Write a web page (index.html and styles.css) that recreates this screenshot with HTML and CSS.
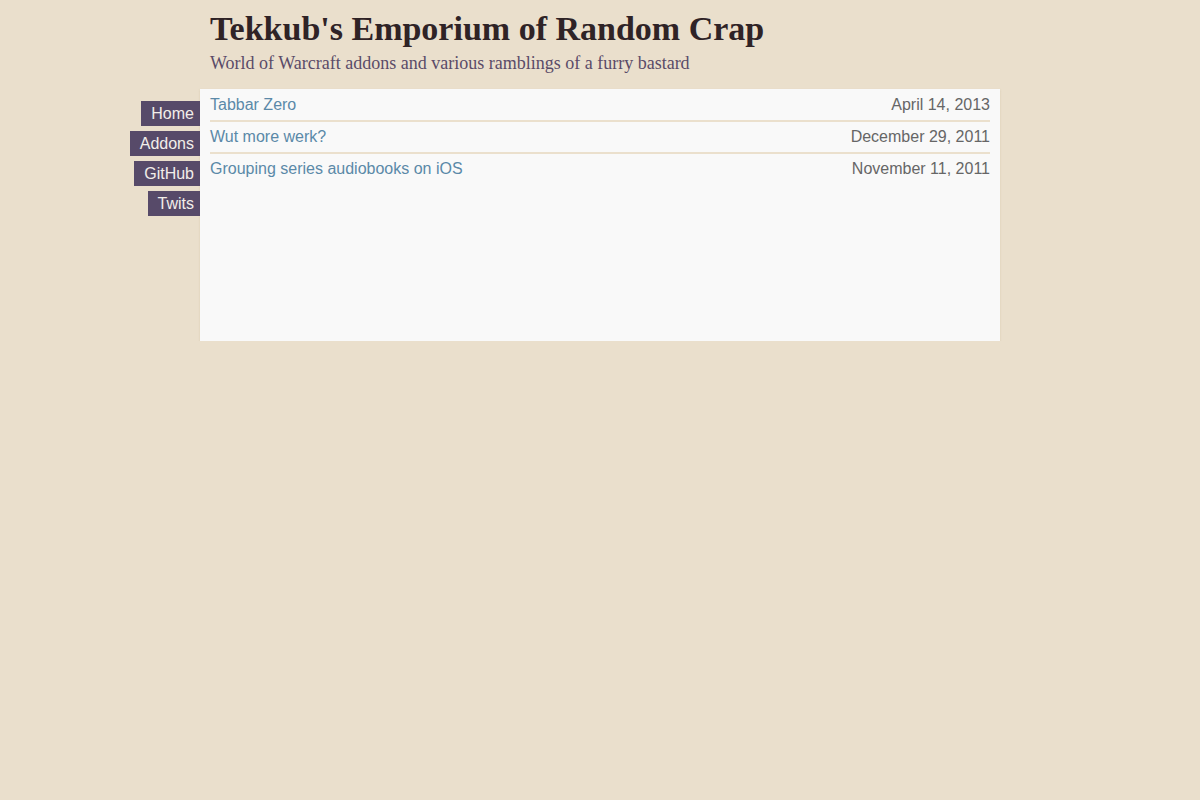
FILE: index.html
```html
<!DOCTYPE html>
<html>
<head>
<meta charset="utf-8">
<title>Tekkub's Emporium of Random Crap</title>
<link rel="stylesheet" href="styles.css">
</head>
<body>
<div class="page">
  <header class="site-header">
    <h1 class="site-title">Tekkub's Emporium of Random Crap</h1>
    <p class="site-tagline">World of Warcraft addons and various ramblings of a furry bastard</p>
  </header>
  <div class="body-wrap">
    <nav class="side-nav">
      <a class="nav-item" href="#">Home</a>
      <a class="nav-item" href="#">Addons</a>
      <a class="nav-item" href="#">GitHub</a>
      <a class="nav-item" href="#">Twits</a>
    </nav>
    <main class="content">
      <ul class="post-list">
        <li class="post-row"><a class="post-link" href="#">Tabbar Zero</a><span class="post-date">April 14, 2013</span></li>
        <li class="post-row"><a class="post-link" href="#">Wut more werk?</a><span class="post-date">December 29, 2011</span></li>
        <li class="post-row"><a class="post-link" href="#">Grouping series audiobooks on iOS</a><span class="post-date">November 11, 2011</span></li>
      </ul>
    </main>
  </div>
</div>
</body>
</html>
```

FILE: styles.css
```css
html, body {
  margin: 0;
  padding: 0;
  background: #eadfcc;
}
body {
  font-family: "Liberation Sans", Arial, sans-serif;
  font-size: 16px;
}
.page {
  width: 800px;
  margin: 0 auto;
}
.site-header {
  padding: 9px 10px 0 10px;
}
.site-title {
  margin: 0;
  font-family: "Liberation Serif", "Times New Roman", serif;
  font-size: 34px;
  line-height: 39px;
  font-weight: bold;
  color: #2f2326;
}
.site-tagline {
  margin: 5px 0 0 0;
  font-family: "Liberation Serif", "Times New Roman", serif;
  font-size: 18px;
  line-height: 21px;
  color: #5a4b68;
}
.body-wrap {
  position: relative;
  margin-top: 15px;
}
.side-nav {
  position: absolute;
  right: 100%;
  top: 12px;
  display: flex;
  flex-direction: column;
  align-items: flex-end;
  gap: 5px;
}
.nav-item {
  display: block;
  background: #574a69;
  color: #f2eee9;
  text-decoration: none;
  font-size: 16px;
  line-height: 19px;
  padding: 3px 6px 3px 10px;
}
.content {
  background: #f9f9f9;
  min-height: 251px;
  padding: 1px 10px 0 10px;
  box-shadow: 0 1px 2px rgba(180, 160, 120, 0.3);
}
.post-list {
  list-style: none;
  margin: 0;
  padding: 0;
}
.post-row {
  display: flex;
  justify-content: space-between;
  line-height: 30px;
  border-bottom: 2px solid #ebe0cd;
}
.post-row:last-child {
  border-bottom: none;
}
.post-link {
  color: #5b89a8;
  text-decoration: none;
}
.post-date {
  color: #666666;
}
```
